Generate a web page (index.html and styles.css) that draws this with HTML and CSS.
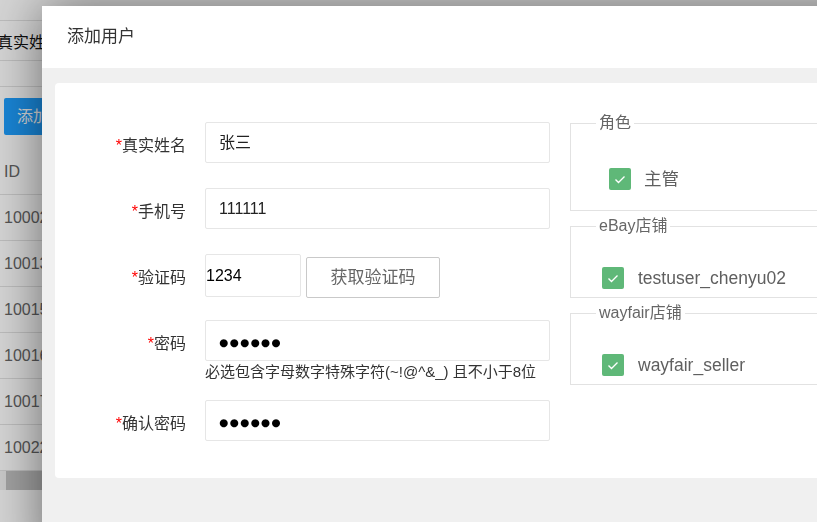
FILE: index.html
```html
<!DOCTYPE html>
<html lang="zh-CN">
<head>
<meta charset="utf-8">
<title>添加用户</title>
<link rel="stylesheet" href="styles.css">
</head>
<body>
<div class="page">
  <div class="search">
    <div class="search-row"><span class="search-label">真实姓名</span></div>
    <div class="search-row2"></div>
  </div>
  <div class="toolbar"><span class="btn-add">添加用户</span></div>
  <div class="table">
    <div class="tr th">ID</div>
    <div class="tr">10002</div>
    <div class="tr">10013</div>
    <div class="tr">10015</div>
    <div class="tr">10016</div>
    <div class="tr">10017</div>
    <div class="tr">10022</div>
  </div>
  <div class="hscroll"><div class="thumb"></div></div>
</div>
<div class="shade"></div>
<div class="modal">
  <div class="modal-title">添加用户</div>
  <div class="modal-body">
    <div class="card">
      <div class="form">
        <div class="row">
          <div class="label"><span class="req">*</span>真实姓名</div>
          <div class="input">张三</div>
        </div>
        <div class="row">
          <div class="label"><span class="req">*</span>手机号</div>
          <div class="input">111111</div>
        </div>
        <div class="row row-code">
          <div class="label"><span class="req">*</span>验证码</div>
          <div class="input input-code">1234</div>
          <div class="btn-code">获取验证码</div>
        </div>
        <div class="row row-pwd">
          <div class="label"><span class="req">*</span>密码</div>
          <div class="field">
            <div class="input"><span class="dots">●●●●●●</span></div>
            <div class="hint">必选包含字母数字特殊字符(~!@^&amp;_) 且不小于8位</div>
          </div>
        </div>
        <div class="row">
          <div class="label"><span class="req">*</span>确认密码</div>
          <div class="input"><span class="dots">●●●●●●</span></div>
        </div>
      </div>
      <div class="side">
        <fieldset class="fs fs-role">
          <legend>角色</legend>
          <div class="opt"><span class="check"><svg viewBox="0 0 22 22" width="22" height="22"><path d="M6.5 11.5 L9.5 14.5 L15.5 8.5" fill="none" stroke="#fff" stroke-width="1.4"/></svg></span><span class="opt-text">主管</span></div>
        </fieldset>
        <fieldset class="fs">
          <legend>eBay店铺</legend>
          <div class="opt"><span class="check"><svg viewBox="0 0 22 22" width="22" height="22"><path d="M6.5 11.5 L9.5 14.5 L15.5 8.5" fill="none" stroke="#fff" stroke-width="1.4"/></svg></span><span class="opt-text">testuser_chenyu02</span></div>
        </fieldset>
        <fieldset class="fs">
          <legend>wayfair店铺</legend>
          <div class="opt"><span class="check"><svg viewBox="0 0 22 22" width="22" height="22"><path d="M6.5 11.5 L9.5 14.5 L15.5 8.5" fill="none" stroke="#fff" stroke-width="1.4"/></svg></span><span class="opt-text">wayfair_seller</span></div>
        </fieldset>
      </div>
    </div>
  </div>
</div>
</body>
</html>
```
FILE: styles.css
```css
html, body {
  margin: 0;
  padding: 0;
}
body {
  width: 817px;
  height: 522px;
  overflow: hidden;
  background: #fff;
  font-family: "Liberation Sans", "Noto Sans CJK SC", sans-serif;
}

/* background page */
.page {
  padding-top: 20px;
}
.search-row {
  height: 39px;
  border-top: 1px solid #e2e2e2;
  border-bottom: 1px solid #e2e2e2;
  display: flex;
  align-items: center;
}
.search-label {
  margin-left: -3px;
  font-size: 16px;
  color: #111;
}
.search-row2 {
  height: 25px;
  border-bottom: 1px solid #e2e2e2;
}
.toolbar {
  padding: 11px 0 0 4px;
  height: 37px;
}
.btn-add {
  display: inline-block;
  height: 37px;
  line-height: 37px;
  padding: 0 13px;
  background: #1e9fff;
  color: #fff;
  font-size: 16px;
  border-radius: 2px;
}
.table {
  margin-top: 14px;
}
.tr {
  height: 45px;
  line-height: 45px;
  border-bottom: 1px solid #e2e2e2;
  padding-left: 4px;
  font-size: 16px;
  color: #666;
}
.th {
  color: #666;
}
.hscroll {
  height: 19px;
  background: #f1f1f1;
  padding-left: 6px;
}
.thumb {
  height: 19px;
  background: #c1c1c1;
}
.shade {
  position: fixed;
  inset: 0;
  background: rgba(0, 0, 0, 0.17);
}

/* modal */
.modal {
  position: fixed;
  left: 42px;
  top: 6px;
  width: 900px;
  height: 560px;
  background: #fff;
  box-shadow: 0 0 50px rgba(0, 0, 0, 0.5);
}
.modal-title {
  height: 62px;
  line-height: 62px;
  padding-left: 25px;
  font-size: 17px;
  color: #333;
}
.modal-body {
  background: #f0f0f0;
  padding: 15px 0 0 13px;
  height: 483px;
}
.card {
  background: #fff;
  border-radius: 4px;
  height: 395px;
  display: flex;
  gap: 20px;
}
.form {
  width: 495px;
  padding-top: 39px;
}
.row {
  display: flex;
  align-items: flex-start;
  margin-bottom: 25px;
}
.label {
  box-sizing: border-box;
  width: 131px;
  margin-right: 19px;
  height: 41px;
  line-height: 41px;
  padding-top: 3px;
  text-align: right;
  font-size: 16px;
  color: #333;
}
.req {
  color: #f00;
}
.input {
  box-sizing: border-box;
  width: 345px;
  height: 41px;
  line-height: 39px;
  border: 1px solid #e6e6e6;
  border-radius: 2px;
  padding-left: 13px;
  font-size: 16px;
  color: #222;
}
.row-code {
  margin-bottom: 22px;
}
.input-code {
  width: 96px;
  height: 43px;
  line-height: 41px;
  padding-left: 0;
  color: #000;
}
.btn-code {
  box-sizing: border-box;
  margin: 3px 0 0 5px;
  width: 134px;
  height: 41px;
  line-height: 39px;
  border: 1px solid #c9c9c9;
  border-radius: 2px;
  text-align: center;
  font-size: 17px;
  color: #666;
}
.row-pwd {
  margin-bottom: 18px;
}
.dots {
  font-family: "DejaVu Sans", sans-serif;
  font-size: 10.5px;
  color: #000;
  letter-spacing: 1.3px;
}
.hint {
  margin-top: 1px;
  font-size: 15px;
  line-height: 20px;
  color: #333;
}

/* right side */
.side {
  width: 300px;
  padding-top: 30px;
}
.fs {
  margin: 0 0 5px;
  border: 1px solid #e2e2e2;
  padding: 0 0 8px 25px;
  min-width: 0;
}
.fs legend {
  padding: 0 3px;
  font-size: 16px;
  line-height: 20px;
  color: #666;
}
.opt {
  display: flex;
  align-items: center;
  margin: 31px 0 0 6px;
}
.fs-role {
  padding-bottom: 20px;
}
.fs-role .opt {
  margin: 35px 0 0 13px;
}
.check {
  width: 22px;
  height: 22px;
  border-radius: 2px;
  background: #5fb878;
  display: flex;
  margin-right: 14px;
}
.fs-role .check {
  margin-right: 13px;
}
.opt-text {
  font-size: 17.5px;
  color: #5f5f5f;
  line-height: 22px;
}
```
